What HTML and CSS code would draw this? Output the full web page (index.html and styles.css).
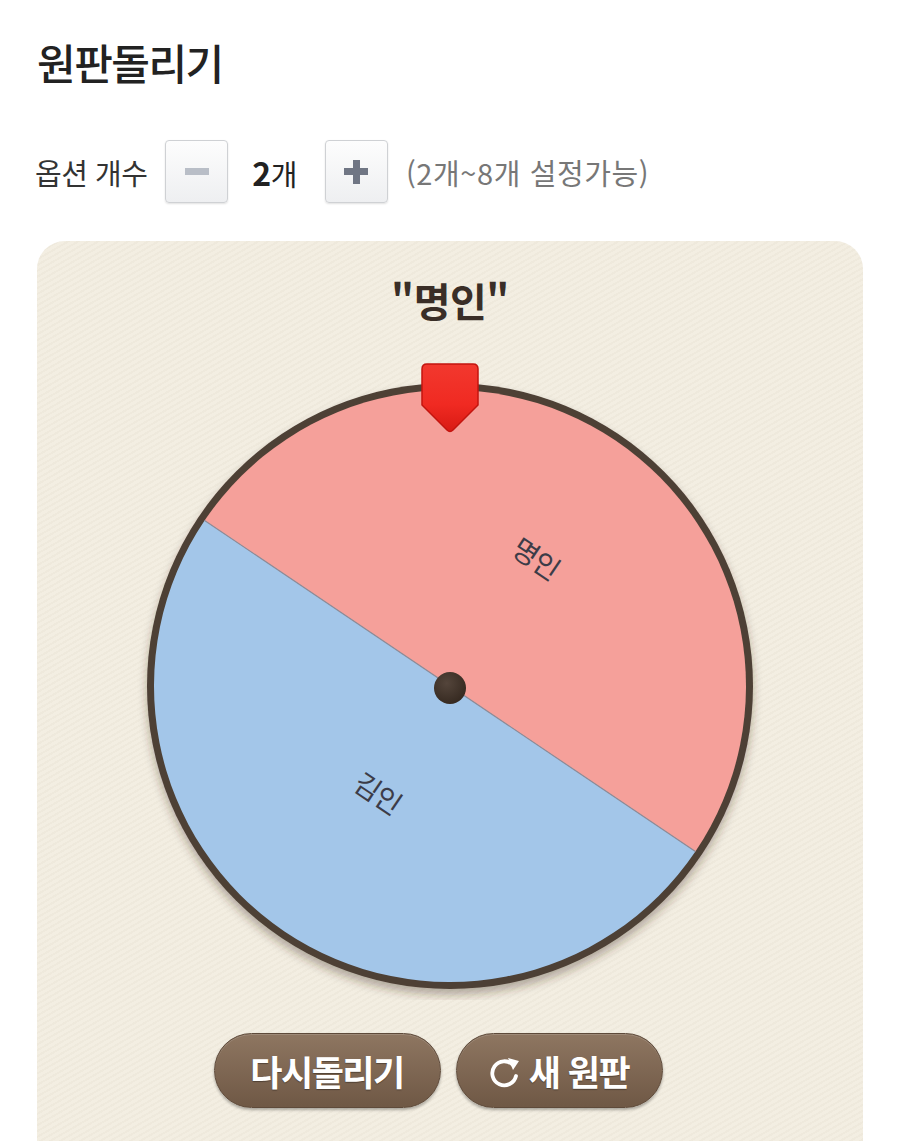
FILE: index.html
```html
<!DOCTYPE html>
<html lang="ko">
<head>
  <meta charset="UTF-8" />
  <title>원판돌리기</title>
  <link rel="stylesheet" href="styles.css">
</head>
<body>
  <div class="page">
    <h1 class="title">원판돌리기</h1>
    <div class="option-row">
      <span class="option-label">옵션 개수</span>
      <button class="step-btn minus" aria-label="줄이기"><span class="bar"></span></button>
      <span class="option-count"><b>2</b>개</span>
      <button class="step-btn plus" aria-label="늘리기"><span class="bar"></span><span class="bar vert"></span></button>
      <span class="option-hint">(2개~8개 설정가능)</span>
    </div>
    <div class="board">
      <div class="result">"명인"</div>
      <svg class="wheel" width="640" height="650" viewBox="0 0 640 650">
        <defs>
          <filter id="wheelShadow" x="-10%" y="-10%" width="120%" height="125%">
            <feDropShadow dx="0" dy="6" stdDeviation="5" flood-color="#3a2a1c" flood-opacity="0.35" />
          </filter>
          <linearGradient id="pinGrad" x1="0" y1="0" x2="0" y2="1">
            <stop offset="0" stop-color="#f2382e" />
            <stop offset="0.6" stop-color="#f02a22" />
            <stop offset="1" stop-color="#d81a14" />
          </linearGradient>
          <radialGradient id="dotGrad" cx="0.4" cy="0.35" r="0.7">
            <stop offset="0" stop-color="#54453b" />
            <stop offset="1" stop-color="#34281f" />
          </radialGradient>
        </defs>
        <g filter="url(#wheelShadow)">
          <circle cx="320" cy="336" r="303" fill="#4d3f35" />
        </g>
        <g transform="rotate(34 320 336)">
          <path d="M24 336 A296 296 0 0 1 616 336 Z" fill="#f5a09a" />
          <path d="M616 336 A296 296 0 0 1 24 336 Z" fill="#a3c6e9" />
          <line x1="24" y1="336" x2="616" y2="336" stroke="#8e8c98" stroke-width="1.2" />
          <text x="320" y="181" class="seg-label">명인</text>
          <text x="320" y="464" class="seg-label">김인</text>
        </g>
        <circle cx="320" cy="338" r="16" fill="url(#dotGrad)" />
        <path d="M297 14 H343 Q348 14 348 19 V55 L323 80 Q320 83 317 80 L292 55 V19 Q292 14 297 14 Z"
              fill="url(#pinGrad)" stroke="#c3150f" stroke-width="1.5" />
      </svg>
      <div class="actions">
        <button class="pill-btn">다시돌리기</button>
        <button class="pill-btn">
          <svg class="reload-icon" width="32" height="36" viewBox="0 0 32 36">
            <path d="M24 11 A12 12 0 1 0 27 22" fill="none" stroke="#fff" stroke-width="3.8" stroke-linecap="round" />
            <path d="M19 4 L30 7 L24 16 Z" fill="#fff" />
          </svg>
          새 원판
        </button>
      </div>
    </div>
  </div>
</body>
</html>
```

FILE: styles.css
```css
html, body {
  margin: 0;
  padding: 0;
  background: #fff;
  font-family: "Noto Sans CJK KR", "Noto Sans", sans-serif;
  color: #222;
}
.page {
  padding: 38px 37px 0 37px;
}
.title {
  margin: 0;
  font-size: 42px;
  line-height: 48px;
  font-weight: 500;
  letter-spacing: -1.5px;
  color: #222;
}
.option-row {
  display: flex;
  align-items: center;
  height: 63px;
  margin-top: 54px;
  font-size: 29px;
}
.option-label {
  color: #333;
  letter-spacing: -0.5px;
  margin-right: 18px;
  margin-left: -2px;
}
.step-btn {
  width: 63px;
  height: 63px;
  padding: 0;
  border: 1px solid #cfd1d4;
  border-radius: 4px;
  background: linear-gradient(#fdfdfd, #eeeff1);
  box-shadow: 0 1px 2px rgba(0,0,0,0.12);
  position: relative;
  cursor: pointer;
}
.step-btn .bar {
  position: absolute;
  left: 50%;
  top: 50%;
  width: 24px;
  height: 7px;
  margin: -3.5px 0 0 -12px;
  background: #b9bec7;
}
.step-btn.plus .bar {
  background: #707684;
}
.step-btn.plus .bar.vert {
  width: 7px;
  height: 24px;
  margin: -12px 0 0 -3.5px;
}
.option-count {
  margin: 0 28px 0 24px;
  color: #222;
  letter-spacing: -0.5px;
}
.option-count b {
  font-weight: 700;
  font-size: 32px;
}
.option-hint {
  margin-left: 18px;
  color: #777;
  font-size: 29px;
  letter-spacing: 0.6px;
}
.board {
  margin-top: 38px;
  border-radius: 28px 28px 0 0;
  background-color: #f3eee2;
  background-image: repeating-linear-gradient(150deg, rgba(120,100,60,0.035) 0 2px, transparent 2px 5px);
  padding: 37px 0 40px 0;
  display: flex;
  flex-direction: column;
  align-items: center;
}
.result {
  font-size: 40px;
  line-height: 44px;
  font-weight: 700;
  color: #3a2e27;
  letter-spacing: -0.5px;
}
.wheel {
  display: block;
  margin-top: 28px;
}
.seg-label {
  font-family: "Noto Sans CJK KR", sans-serif;
  font-size: 28px;
  fill: #3c3c48;
  text-anchor: middle;
  dominant-baseline: central;
  letter-spacing: -1px;
}
.actions {
  display: flex;
  gap: 15px;
  margin-top: 33px;
  padding-right: 24px;
}
.pill-btn {
  height: 75px;
  padding: 0 18px;
  border: 1px solid #5e4a3a;
  border-radius: 38px;
  background: linear-gradient(#8e7661, #6f5845);
  box-shadow: 0 2px 3px rgba(0,0,0,0.3), inset 0 1px 0 rgba(255,255,255,0.15);
  color: #fff;
  font-family: "Noto Sans CJK KR", sans-serif;
  font-size: 35px;
  font-weight: 700;
  letter-spacing: -1.5px;
  text-shadow: 0 1px 1px rgba(0,0,0,0.35);
  display: flex;
  align-items: center;
  gap: 8px;
  cursor: pointer;
}
.pill-btn:first-child {
  width: 227px;
  justify-content: center;
}
.pill-btn:last-child {
  width: 207px;
  justify-content: center;
}
.reload-icon {
  display: block;
  margin-top: 2px;
}
```
